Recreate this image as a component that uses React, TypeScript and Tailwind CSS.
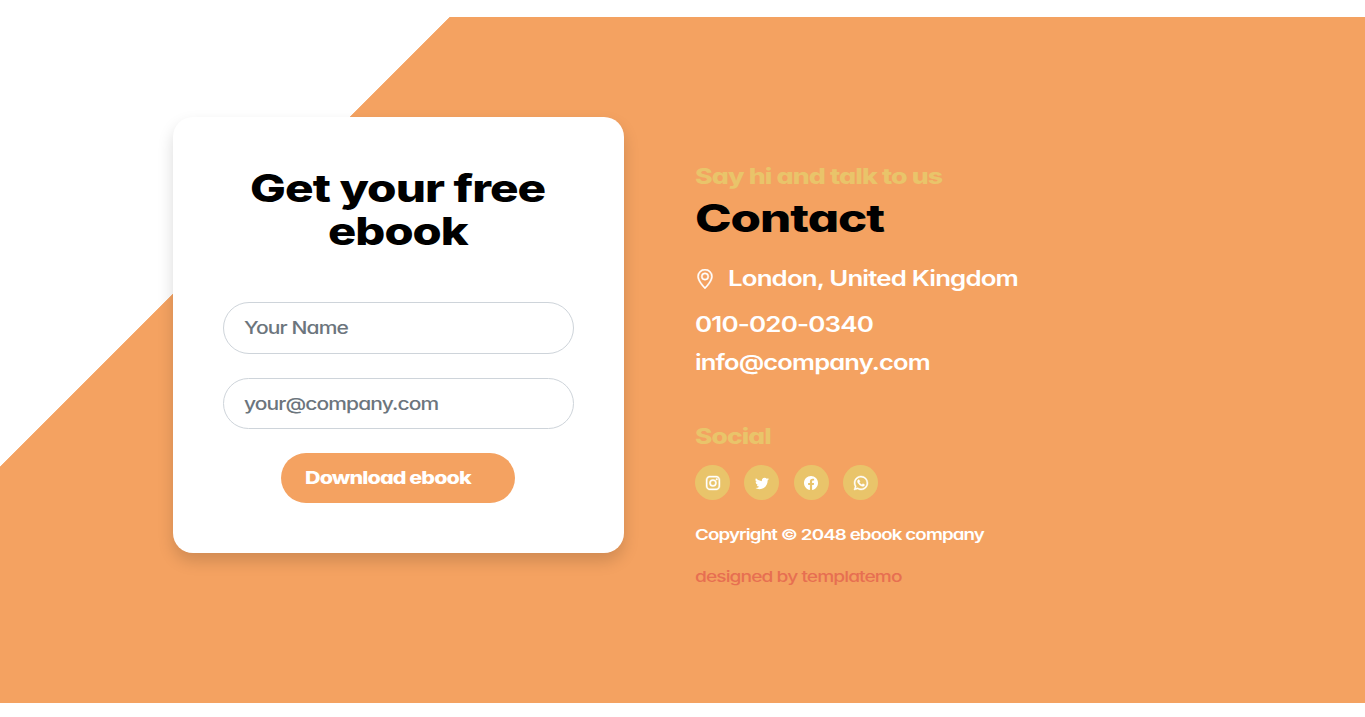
import { useLayoutEffect, useRef, useState } from "react";
import { BsFacebook, BsGeoAlt, BsInstagram, BsTwitter, BsWhatsapp } from "react-icons/bs";

type FitProps = { text: string; width: number };

// Stretches a line of text horizontally so it fills the given width.
function Fit({ text, width }: FitProps) {
  const ref = useRef<HTMLSpanElement>(null);
  const [scale, setScale] = useState(1);
  useLayoutEffect(() => {
    if (ref.current) setScale(width / ref.current.offsetWidth);
  }, [text, width]);
  return (
    <span className="block text-left" style={{ width }}>
      <span
        ref={ref}
        className="inline-block origin-left whitespace-nowrap align-top"
        style={{ transform: `scaleX(${scale})` }}
      >
        {text}
      </span>
    </span>
  );
}

const socials = [
  { name: "Instagram", Icon: BsInstagram, weight: "stroke-[0.5]" },
  { name: "Twitter", Icon: BsTwitter, weight: "stroke-0" },
  { name: "Facebook", Icon: BsFacebook, weight: "stroke-0" },
  { name: "WhatsApp", Icon: BsWhatsapp, weight: "stroke-[0.5]" },
];

export default function App() {
  return (
    <div className="h-[717px] w-full overflow-hidden bg-white pt-[17px] font-['Inter','Open_Sans',sans-serif] tracking-[-0.045em] [font-feature-settings:'cv11']">
      <section className="flex h-[686px] items-start bg-[linear-gradient(135deg,#fff_317.6px,#f4a261_318.3px)] pl-[173px] pt-[100px]">
        <form className="flex h-[436px] w-[451px] shrink-0 flex-col items-center rounded-[20px] bg-white pt-[50px] shadow-[0_8px_16px_rgba(0,0,0,0.15)]">
          <h2 className="mr-0.5 flex flex-col items-center text-[38px] font-extrabold leading-[43px] tracking-[-0.02em] text-black">
            <Fit text="Get your free" width={295} />
            <Fit text="ebook" width={140} />
          </h2>
          <label className="mt-[49px] flex h-[52px] w-[351px] items-center rounded-full border border-[#ced4da] pl-[19.5px] text-[17px] font-medium leading-6 text-[#6c757d]">
            <Fit text="Your Name" width={104} />
          </label>
          <label className="mt-6 flex h-[51px] w-[351px] items-center rounded-full border border-[#ced4da] pl-[19.5px] text-[17px] font-medium leading-6 text-[#6c757d]">
            <Fit text="your@company.com" width={194} />
          </label>
          <button
            type="button"
            className="mr-px mt-6 flex h-[50px] w-[234px] items-center rounded-full bg-[#f4a261] pl-6 text-[17px] font-extrabold leading-6 text-white"
          >
            <Fit text="Download ebook" width={166} />
          </button>
        </form>

        <div className="ml-[71px] flex flex-col pt-[46px] text-[21.5px] font-semibold leading-[26px] text-white">
          <h6 className="font-extrabold text-[#e9c46a]">
            <Fit text="Say hi and talk to us" width={247} />
          </h6>
          <h2 className="mt-[7px] text-[38px] font-extrabold leading-[44px] tracking-[-0.02em] text-black">
            <Fit text="Contact" width={189} />
          </h2>
          <p className="mt-[25px] flex items-center leading-[27px]">
            <BsGeoAlt className="mr-[13px] size-5 shrink-0 stroke-[0.4]" />
            <Fit text="London, United Kingdom" width={290} />
          </p>
          <p className="mt-[19px]">
            <Fit text="010-020-0340" width={178} />
          </p>
          <p className="mt-3 leading-[27px]">
            <Fit text="info@company.com" width={235} />
          </p>
          <h6 className="mt-[47px] font-extrabold text-[#e9c46a]">
            <Fit text="Social" width={76} />
          </h6>
          <div className="mt-4 flex gap-[14.4px]">
            {socials.map(({ name, Icon, weight }) => (
              <a
                key={name}
                aria-label={name}
                className="flex size-[35px] items-center justify-center rounded-full bg-[#e9c46a]"
              >
                <Icon className={`size-[14px] overflow-visible ${weight}`} />
              </a>
            ))}
          </div>
          <p className="mt-[25px] text-[15px] leading-5">
            <Fit text="Copyright © 2048 ebook company" width={289} />
          </p>
          <p className="mt-[22px] text-[15px] font-medium leading-5 text-[#e76f51]">
            <Fit text="designed by templatemo" width={207} />
          </p>
        </div>
      </section>
    </div>
  );
}
